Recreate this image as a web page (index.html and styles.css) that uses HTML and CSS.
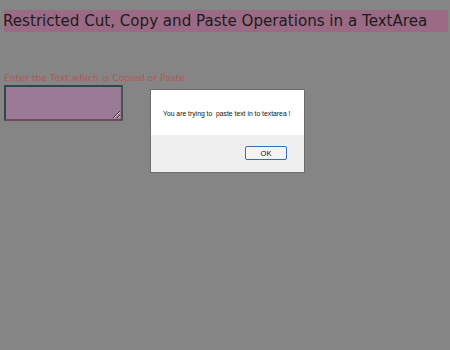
FILE: index.html
```html
<!DOCTYPE html>
<html lang="en">
<head>
  <meta charset="UTF-8">
  <title>Restricted Cut, Copy and Paste</title>
  <link rel="stylesheet" href="styles.css">
</head>
<body>
  <h1 class="title">Restricted Cut, Copy and Paste Operations in a TextArea</h1>
  <p class="label">Enter the Text which is Copied or Paste</p>
  <textarea class="box"></textarea>

  <!-- alert dialog -->
  <div class="dialog">
    <div class="dialog-body">You are trying to &nbsp;paste text in to textarea !</div>
    <div class="dialog-foot">
      <button class="ok">OK</button>
    </div>
  </div>
</body>
</html>
```

FILE: styles.css
```css
* {
  margin: 0;
  padding: 0;
  box-sizing: border-box;
}

body {
  background: #858585;
  width: 450px;
  height: 350px;
  position: relative;
  overflow: hidden;
  font-family: 'DejaVu Sans', sans-serif;
}

.title {
  margin: 10px 2px 0 4px;
  height: 22px;
  line-height: 22px;
  background: #9b6a84;
  color: #1c1c1c;
  font-size: 15.1px;
  font-weight: normal;
  white-space: nowrap;
  text-indent: -1px;
}

.label {
  margin: 40px 0 0 4px;
  font-size: 9.3px;
  color: #b0585a;
  line-height: 12px;
}

.box {
  display: block;
  margin: 1px 0 0 4px;
  width: 119px;
  height: 36px;
  background: #9a7a96;
  border: 2px solid #2e4a48;
  border-right-color: #3e5654;
  border-bottom-color: #6e4a5a;
  resize: both;
}

.dialog {
  position: absolute;
  left: 150px;
  top: 89px;
  width: 155px;
  height: 84px;
  border: 1px solid #6c6c6c;
  background: #ffffff;
  display: flex;
  flex-direction: column;
  font-family: 'Liberation Sans', Arial, sans-serif;
}

.dialog-body {
  flex: 1;
  padding: 20px 0 0 12px;
  font-size: 6.8px;
  color: #111;
  white-space: nowrap;
}

.dialog-foot {
  height: 37px;
  background: #efefef;
  display: flex;
  justify-content: flex-end;
  align-items: center;
  padding-right: 17px;
}

.ok {
  width: 42px;
  height: 14px;
  margin-top: -1px;
  font-family: 'Liberation Sans', Arial, sans-serif;
  font-size: 7.5px;
  color: #111;
  background: #f4f4f4;
  border: 1px solid #3a6bb5;
  border-radius: 2px;
}
```
